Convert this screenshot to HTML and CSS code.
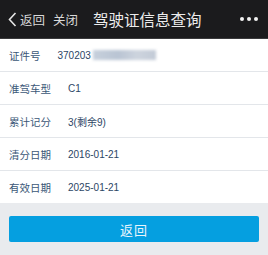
FILE: index.html
```html
<!DOCTYPE html>
<html lang="zh-CN">
<head>
  <meta charset="UTF-8" />
  <meta name="viewport" content="width=device-width, initial-scale=1.0" />
  <title>驾驶证信息查询</title>
  <link rel="stylesheet" href="styles.css">
</head>
<body>
  <header class="topbar">
    <div class="nav-left">
      <svg class="back-icon" width="9" height="15" viewBox="0 0 9 15">
        <path d="M7.5 1 L1.5 7.5 L7.5 14" fill="none" stroke="#e6e6e6" stroke-width="1.6"/>
      </svg>
      <span class="nav-link">返回</span>
      <span class="nav-link close">关闭</span>
    </div>
    <h1 class="title">驾驶证信息查询</h1>
    <div class="more"><i></i><i></i><i></i></div>
  </header>

  <main>
    <ul class="info-list">
      <li class="info-row">
        <span class="label">证件号</span>
        <span class="value">370203<span class="masked"></span></span>
      </li>
      <li class="info-row">
        <span class="label">准驾车型</span>
        <span class="value">C1</span>
      </li>
      <li class="info-row">
        <span class="label">累计记分</span>
        <span class="value">3(剩余9)</span>
      </li>
      <li class="info-row">
        <span class="label">清分日期</span>
        <span class="value">2016-01-21</span>
      </li>
      <li class="info-row">
        <span class="label">有效日期</span>
        <span class="value">2025-01-21</span>
      </li>
    </ul>

    <div class="actions">
      <button class="btn-back">返回</button>
    </div>
  </main>
</body>
</html>
```

FILE: styles.css
```css
* {
  margin: 0;
  padding: 0;
  box-sizing: border-box;
  font-family: 'Noto Sans CJK SC', 'Liberation Sans', sans-serif;
}

body {
  width: 268px;
  height: 255px;
  background-color: #e9ebee;
  overflow: hidden;
}

.topbar {
  display: flex;
  align-items: center;
  height: 39px;
  padding: 0 10px 0 8px;
  background-color: #1b1b1d;
  border-bottom: 1px solid #3a3a3c;
}

.nav-left {
  display: flex;
  align-items: center;
}

.back-icon {
  margin-right: 3px;
}

.nav-link {
  color: #d8d8d8;
  font-size: 12.5px;
}

.nav-link.close {
  margin-left: 8px;
}

.title {
  margin-left: 15px;
  color: #ececec;
  font-size: 15.5px;
  font-weight: 400;
}

.more {
  display: flex;
  gap: 3px;
  margin-left: auto;
}

.more i {
  display: block;
  width: 4px;
  height: 4px;
  border-radius: 50%;
  background-color: #f2f2f2;
}

.info-list {
  list-style: none;
  background-color: #ffffff;
}

.info-row {
  display: flex;
  align-items: center;
  gap: 17px;
  height: 33px;
  padding-left: 9px;
  border-bottom: 1px solid #e3e6ea;
  font-size: 10.5px;
  color: #3b5777;
}

.info-row:last-child {
  height: 32px;
  border-bottom: none;
}

.value {
  display: flex;
  align-items: center;
  font-family: 'Liberation Sans', 'Noto Sans CJK SC', sans-serif;
  font-size: 10px;
  color: #2c4665;
}

.masked {
  display: inline-block;
  width: 63px;
  height: 10px;
  margin-left: 2px;
  background: linear-gradient(90deg, #c7d0dc, #b9c4d3 40%, #cdd4de 70%, #c2cad6);
  filter: blur(1.5px);
}

.actions {
  padding: 13px 9px 0;
}

.btn-back {
  display: block;
  width: 100%;
  height: 26px;
  border: none;
  border-radius: 2px;
  background-color: #059fe0;
  color: #e8f5fc;
  font-size: 13px;
  letter-spacing: 1px;
}
```
